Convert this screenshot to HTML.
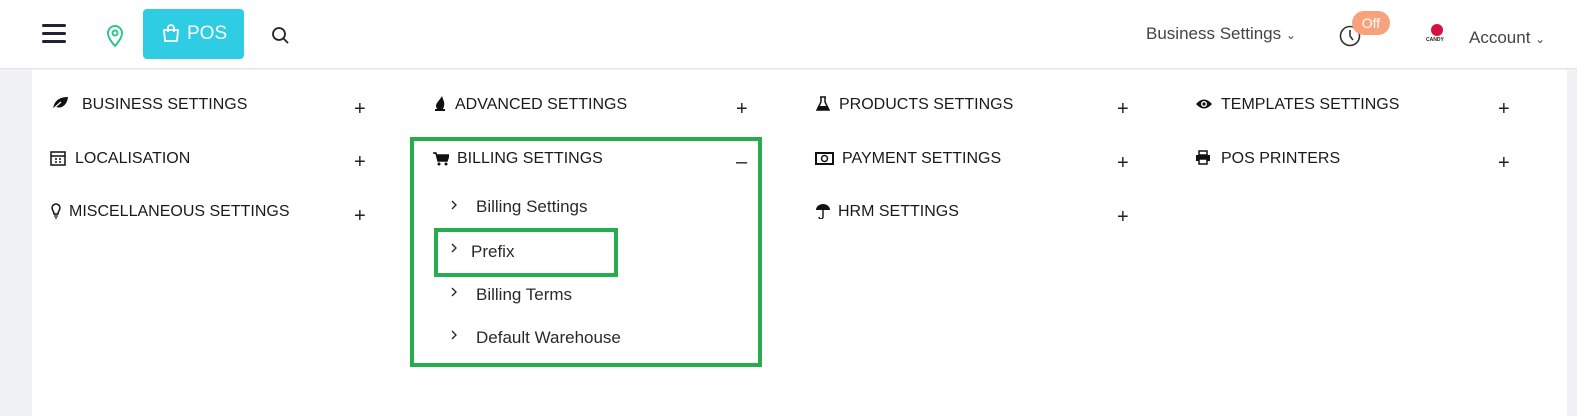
<!DOCTYPE html>
<html><head><meta charset="utf-8"><style>
*{margin:0;padding:0;box-sizing:border-box}
body{width:1577px;height:416px;overflow:hidden;background:#f0f1f5;font-family:"Liberation Sans",sans-serif;color:#222;position:relative}
.hdr{position:absolute;left:0;top:0;width:1577px;height:69px;background:#fff;border-bottom:1px solid #e3e3e6}
.card{position:absolute;left:32px;top:70px;width:1535px;height:346px;background:#fff}
.a{position:absolute;white-space:nowrap}
.h{font-size:16px;line-height:20px;color:#1a1a1a}
.p{font-size:20px;font-weight:300;line-height:20px;color:#222}
.s{font-size:17px;line-height:20px;color:#2a2a2a}
</style></head><body>
<div class="hdr">
 <div class="a" style="left:42px;top:24px;width:24px;height:3px;background:#1f2333;border-radius:2px"></div>
 <div class="a" style="left:42px;top:32px;width:24px;height:3px;background:#1f2333;border-radius:2px"></div>
 <div class="a" style="left:42px;top:40px;width:24px;height:3px;background:#1f2333;border-radius:2px"></div>
 <svg class="a" style="left:105px;top:24px" width="20" height="24" viewBox="0 0 20 24"><path d="M10 22C4 15 3 12 3 9a7 7 0 0114 0c0 3-1 6-7 13z" fill="none" stroke="#2fc58d" stroke-width="2"/><circle cx="10" cy="9" r="2.5" fill="none" stroke="#2fc58d" stroke-width="2"/></svg>
 <div class="a" style="left:143px;top:9px;width:101px;height:50px;background:#2ecde3;border-radius:4px"></div>
 <svg class="a" style="left:161px;top:23px" width="20" height="20" viewBox="0 0 20 20"><path d="M3 7h14l-1 11H4z" fill="none" stroke="#fff" stroke-width="1.8"/><path d="M7 9V5a3 3 0 016 0v4" fill="none" stroke="#fff" stroke-width="1.8"/></svg>
 <div class="a" style="left:187px;top:23px;font-size:19px;color:#fff">POS</div>
 <svg class="a" style="left:271px;top:26px" width="20" height="20" viewBox="0 0 20 20"><circle cx="8" cy="8" r="6" fill="none" stroke="#222" stroke-width="1.8"/><path d="M12.5 12.5L17 17" stroke="#222" stroke-width="1.8"/></svg>
 <div class="a" style="left:1146px;top:24px;font-size:17px;color:#444">Business Settings <span style="font-size:12px">&#8964;</span></div>
 <svg class="a" style="left:1338px;top:24px" width="24" height="24" viewBox="0 0 24 24"><circle cx="12" cy="12" r="9.5" fill="none" stroke="#333" stroke-width="1.6"/><path d="M12 6v6l3 4" fill="none" stroke="#333" stroke-width="1.6"/></svg>
 <div class="a" style="left:1352px;top:11px;width:38px;height:24px;background:#f8a27c;border-radius:12px;color:#fff;font-size:14px;text-align:center;line-height:24px">Off</div>
 <div class="a" style="left:1431px;top:24px;width:12px;height:12px;border-radius:50%;background:#d5123e"></div>
 <div class="a" style="left:1426px;top:37px;font-size:5px;font-weight:bold">CANDY</div>
 <div class="a" style="left:1469px;top:28px;font-size:17px;color:#444">Account <span style="font-size:12px">&#8964;</span></div>
</div>
<div class="card"></div>
<!-- column 1 -->
<svg class="a" style="left:51px;top:96px" width="18" height="14" viewBox="0 0 18 14"><path d="M2 13C3 5 8 1 17 1 16 9 11 13 5 11z" fill="#111"/><path d="M1 14l9-8" stroke="#fff" stroke-width="1.2"/></svg>
<div class="a h" style="left:82px;top:95px">BUSINESS SETTINGS</div>
<div class="a p" style="left:354px;top:99px">+</div>
<svg class="a" style="left:50px;top:150px" width="16" height="16" viewBox="0 0 16 16"><rect x="1" y="2" width="14" height="13" fill="none" stroke="#111" stroke-width="1.5"/><path d="M1 6h14M5 9h2M9 9h2M5 12h2M9 12h2" stroke="#111" stroke-width="1.5"/></svg>
<div class="a h" style="left:75px;top:149px">LOCALISATION</div>
<div class="a p" style="left:354px;top:152px">+</div>
<svg class="a" style="left:51px;top:203px" width="10" height="16" viewBox="0 0 10 16"><path d="M3 11C3 8 1 7 1 5a4 4 0 018 0c0 2-2 3-2 6z" fill="none" stroke="#111" stroke-width="1.5"/><path d="M3 13h4M4 15h2" stroke="#111" stroke-width="1.3"/></svg>
<div class="a h" style="left:69px;top:202px">MISCELLANEOUS SETTINGS</div>
<div class="a p" style="left:354px;top:206px">+</div>
<!-- column 2 -->
<svg class="a" style="left:434px;top:95px" width="12" height="16" viewBox="0 0 12 16"><path d="M8 1C9 5 11 7 10 11a4 4 0 01-8 0C2 8 5 6 8 1z" fill="#111"/><rect x="1" y="14" width="10" height="2" fill="#111"/></svg>
<div class="a h" style="left:455px;top:95px">ADVANCED SETTINGS</div>
<div class="a p" style="left:736px;top:99px">+</div>
<div class="a" style="left:410px;top:137px;width:352px;height:230px;border:4px solid #27ad4e"></div>
<div class="a" style="left:434px;top:228px;width:184px;height:49px;border:4px solid #27ad4e"></div>
<svg class="a" style="left:433px;top:152px" width="16" height="14" viewBox="0 0 16 14"><path d="M0 1h3l2 8h9l2-6H4" fill="#111" stroke="#111" stroke-width="1.5"/><circle cx="6" cy="12" r="1.5" fill="#111"/><circle cx="13" cy="12" r="1.5" fill="#111"/></svg>
<div class="a h" style="left:457px;top:149px">BILLING SETTINGS</div>
<div class="a p" style="left:736px;top:152px">&ndash;</div>
<svg class="a" style="left:451px;top:200px" width="6" height="10" viewBox="0 0 6 10"><path d="M1 1l4 4-4 4" fill="none" stroke="#222" stroke-width="1.3"/></svg>
<div class="a s" style="left:476px;top:197px">Billing Settings</div>
<svg class="a" style="left:451px;top:243px" width="6" height="10" viewBox="0 0 6 10"><path d="M1 1l4 4-4 4" fill="none" stroke="#222" stroke-width="1.3"/></svg>
<div class="a s" style="left:471px;top:242px">Prefix</div>
<svg class="a" style="left:451px;top:287px" width="6" height="10" viewBox="0 0 6 10"><path d="M1 1l4 4-4 4" fill="none" stroke="#222" stroke-width="1.3"/></svg>
<div class="a s" style="left:476px;top:285px">Billing Terms</div>
<svg class="a" style="left:451px;top:330px" width="6" height="10" viewBox="0 0 6 10"><path d="M1 1l4 4-4 4" fill="none" stroke="#222" stroke-width="1.3"/></svg>
<div class="a s" style="left:476px;top:328px">Default Warehouse</div>
<!-- column 3 -->
<svg class="a" style="left:816px;top:96px" width="14" height="15" viewBox="0 0 14 15"><path d="M4 1h6M5 1v5L1 14h12L9 6V1" fill="none" stroke="#111" stroke-width="1.5"/><path d="M3 10h8l2 4H1z" fill="#111"/></svg>
<div class="a h" style="left:839px;top:95px">PRODUCTS SETTINGS</div>
<div class="a p" style="left:1117px;top:99px">+</div>
<svg class="a" style="left:815px;top:152px" width="19" height="13" viewBox="0 0 19 13"><rect x="1" y="1" width="17" height="11" fill="none" stroke="#111" stroke-width="2"/><circle cx="9.5" cy="6.5" r="3" fill="none" stroke="#111" stroke-width="1.5"/></svg>
<div class="a h" style="left:842px;top:149px">PAYMENT SETTINGS</div>
<div class="a p" style="left:1117px;top:153px">+</div>
<svg class="a" style="left:815px;top:203px" width="16" height="16" viewBox="0 0 16 16"><path d="M1 7a7 6 0 0114 0z" fill="#111"/><path d="M8 7v7a2 2 0 01-4 0" fill="none" stroke="#111" stroke-width="1.4"/></svg>
<div class="a h" style="left:838px;top:202px">HRM SETTINGS</div>
<div class="a p" style="left:1117px;top:207px">+</div>
<!-- column 4 -->
<svg class="a" style="left:1195px;top:98px" width="18" height="12" viewBox="0 0 18 12"><path d="M1 6Q9 -3 17 6Q9 15 1 6z" fill="#111"/><circle cx="9" cy="6" r="3" fill="#fff"/><circle cx="9" cy="6" r="1.6" fill="#111"/></svg>
<div class="a h" style="left:1221px;top:95px">TEMPLATES SETTINGS</div>
<div class="a p" style="left:1498px;top:99px">+</div>
<svg class="a" style="left:1195px;top:150px" width="16" height="15" viewBox="0 0 16 15"><rect x="4" y="1" width="8" height="4" fill="none" stroke="#111" stroke-width="1.5"/><rect x="1" y="5" width="14" height="6" fill="#111"/><rect x="4" y="9" width="8" height="5" fill="#fff" stroke="#111" stroke-width="1.5"/></svg>
<div class="a h" style="left:1221px;top:149px">POS PRINTERS</div>
<div class="a p" style="left:1498px;top:153px">+</div>
</body></html>
